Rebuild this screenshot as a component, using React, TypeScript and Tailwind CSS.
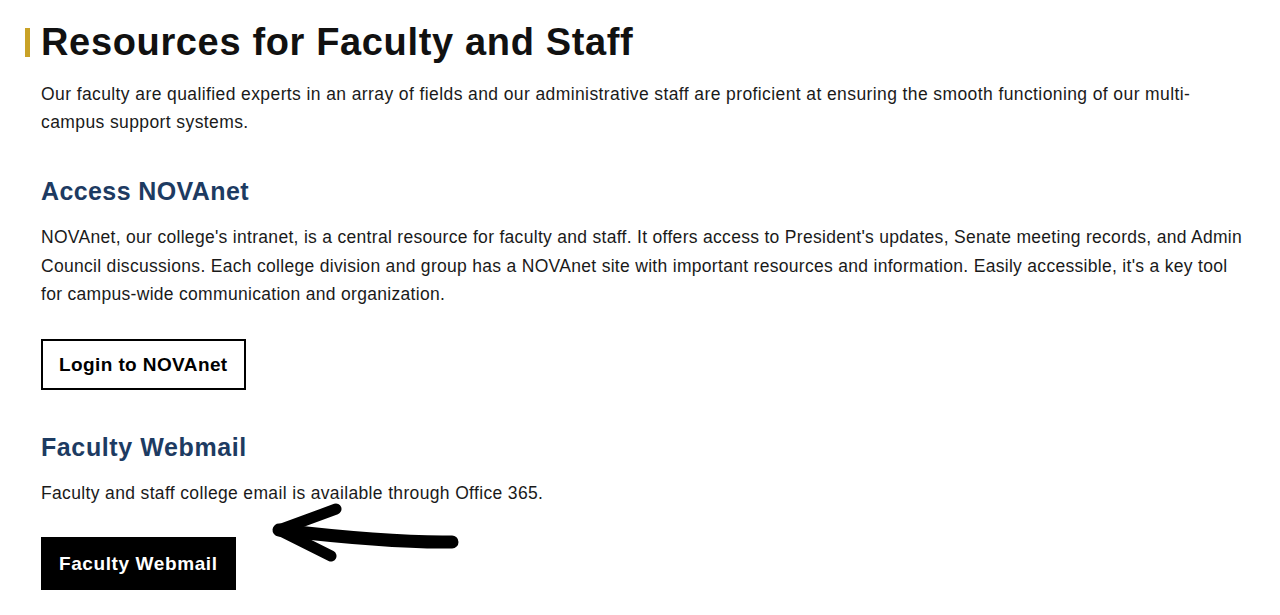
export default function App() {
  return (
    <div className="relative min-h-[615px] bg-white pl-[41px] pr-[36px] pt-[20px] text-[#1a1a1a] font-['Liberation_Sans',Arial,sans-serif]">
      <div className="flex items-center gap-[11px] -ml-[16px]">
        <span className="block h-[29px] w-[5px] bg-[#c9a227]" />
        <h1 className="text-[38px] font-bold leading-[44px] tracking-[0.65px] text-[#111]">Resources for Faculty and Staff</h1>
      </div>

      <p className="mt-[16px] text-[17.5px] leading-[28px] tracking-[0.4px]">
        Our faculty are qualified experts in an array of fields and our administrative staff are proficient at ensuring
        the smooth functioning of our multi-campus support systems.
      </p>

      <h2 className="mt-[39px] text-[25px] font-bold leading-[32px] tracking-[0.4px] text-[#1d3b62]">Access NOVAnet</h2>
      <p className="mt-[16px] text-[17.5px] leading-[28.5px] tracking-[0.3px]">
        NOVAnet, our college's intranet, is a central resource for faculty and staff. It offers access to President's
        updates, Senate meeting records, and Admin Council discussions. Each college division and group has a NOVAnet
        site with important resources and information. Easily accessible, it's a key tool for campus-wide communication
        and organization.
      </p>

      <a
        href="#"
        className="mt-[30px] inline-block border-2 border-black px-[16px] py-[11px] text-[19px] font-bold leading-[25px] tracking-[0.4px] text-black"
      >
        Login to NOVAnet
      </a>

      <h2 className="mt-[41px] text-[25px] font-bold leading-[32px] tracking-[0.6px] text-[#1d3b62]">Faculty Webmail</h2>
      <p className="mt-[16px] text-[17.5px] leading-[28px] tracking-[0.35px]">
        Faculty and staff college email is available through Office 365.
      </p>

      <a
        href="#"
        className="mt-[30px] inline-block bg-black px-[18px] py-[14px] text-[19px] font-bold leading-[25px] tracking-[0.6px] text-white"
      >
        Faculty Webmail
      </a>

      {/* hand-drawn arrow pointing at the webmail button */}
      <svg className="pointer-events-none absolute left-0 top-0" width="1280" height="615" viewBox="0 0 1280 615">
        <g fill="none" stroke="#000" strokeLinecap="round" strokeLinejoin="round">
          <path d="M452 542 C 400 543, 340 537, 279 530" strokeWidth="13" />
          <path d="M336 509 L279 530 L331 556" strokeWidth="11" />
        </g>
      </svg>
    </div>
  );
}
